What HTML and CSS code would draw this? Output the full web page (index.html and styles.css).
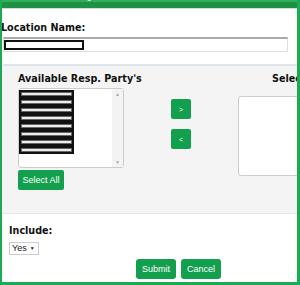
FILE: index.html
```html
<!DOCTYPE html>
<html lang="en">
<head>
    <meta charset="UTF-8">
    <meta name="viewport" content="width=device-width, initial-scale=1.0">
    <title>Location Entry</title>
    <link rel="stylesheet" href="styles.css">
</head>
<body>
    <div class="modal">
        <div class="modal-header">
            <h2>Location Entry</h2>
        </div>

        <div class="field">
            <label class="field-label">Location Name:</label>
            <div class="text-input"><span class="redact"></span></div>
        </div>

        <div class="picker">
            <div class="pick-col">
                <div class="field-label">Available Resp. Party's</div>
                <div class="listbox">
                    <div class="list-items">
                        <div class="redact-row"></div>
                        <div class="redact-row"></div>
                        <div class="redact-row"></div>
                        <div class="redact-row"></div>
                        <div class="redact-row"></div>
                        <div class="redact-row"></div>
                        <div class="redact-row"></div>
                        <div class="redact-row"></div>
                    </div>
                    <div class="scrollbar">
                        <span class="arrow">&#9650;</span>
                        <span class="arrow">&#9660;</span>
                    </div>
                </div>
                <button class="btn btn-select">Select All</button>
            </div>

            <div class="move-col">
                <button class="btn btn-move">&gt;</button>
                <button class="btn btn-move">&lt;</button>
            </div>

            <div class="pick-col selected-col">
                <div class="field-label">Selected Resp. Party's</div>
                <div class="listbox"></div>
                <button class="btn btn-select btn-remove">Remove All</button>
            </div>
        </div>

        <div class="field include">
            <label class="field-label">Include:</label>
            <div class="select-box">Yes <span class="caret">&#9660;</span></div>
        </div>

        <div class="actions">
            <button class="btn btn-action">Submit</button>
            <button class="btn btn-action">Cancel</button>
        </div>
    </div>
</body>
</html>
```

FILE: styles.css
```css
body {
    margin: 0;
    font-family: "Liberation Sans", Arial, sans-serif;
    background: #fff;
}

.modal {
    width: 300px;
    height: 285px;
    box-sizing: border-box;
    border: solid #19ad52;
    border-width: 0 3px 3px 2px;
    overflow: hidden;
    background: #fff;
}

.modal-header {
    height: 8px;
    background: #1e9143;
    box-shadow: inset 0 2px 0 #2fae5e;
    border-bottom: 1px solid #d3dbe0;
    overflow: hidden;
}

.modal-header h2 {
    margin: -10px 0 0 2px;
    font-family: "DejaVu Sans", Verdana, sans-serif;
    font-size: 11px;
    line-height: 12px;
    color: #fff;
}

.field {
    padding: 13px 0 0 1px;
}

.field-label {
    display: block;
    font-family: "DejaVu Sans", Verdana, sans-serif;
    font-weight: bold;
    font-size: 9.6px;
    line-height: 12px;
    color: #111;
    white-space: nowrap;
}

.field > .field-label {
    margin-left: -2px;
}

.text-input {
    width: 285px;
    height: 15px;
    margin-top: 3px;
    box-sizing: border-box;
    border: 1px solid #ddd;
    border-top: 2px solid #aaa;
    padding: 1px 0 0 0;
}

.redact {
    display: block;
    width: 76px;
    height: 6px;
    border: 2px solid #111;
    background: #fff;
}

.picker {
    display: flex;
    margin: 12px 0 0 1px;
    height: 150px;
    padding: 7px 0 0 15px;
    box-sizing: border-box;
    background: #f4f4f4;
    border-top: 2px solid #dde4ea;
    border-bottom: 1px solid #e6e6e6;
}

.pick-col {
    display: flex;
    flex-direction: column;
    align-items: flex-start;
    width: 106px;
    flex-shrink: 0;
}

.listbox {
    display: flex;
    width: 106px;
    height: 80px;
    margin-top: 3px;
    box-sizing: border-box;
    border: 1px solid #ccc;
    border-radius: 3px;
    background: #fff;
}

.list-items {
    flex: 1;
    padding-top: 1px;
}

.redact-row {
    width: 51px;
    height: 4px;
    border: 2px solid #111;
    background: #ececec;
    box-shadow: inset 0 0 0 1px #666;
}

.scrollbar {
    width: 11px;
    display: flex;
    flex-direction: column;
    justify-content: space-between;
    align-items: center;
    background: #f3f3f3;
    padding: 2px 0;
}

.arrow {
    font-size: 5px;
    color: #aaa;
}

.btn {
    border: none;
    border-radius: 2px;
    background: #13a04e;
    color: #fff;
    font-family: "Liberation Sans", Arial, sans-serif;
    font-size: 9px;
    padding: 0;
    cursor: pointer;
}

.btn-select {
    width: 46px;
    height: 20px;
    margin-top: 2px;
}

.move-col {
    display: flex;
    flex-direction: column;
    gap: 10px;
    padding-top: 26px;
    margin: 0 47px;
}

.btn-move {
    width: 20px;
    height: 20px;
    font-size: 7px;
}

.selected-col .field-label {
    margin-left: 34px;
}

.selected-col .listbox {
    width: 110px;
    margin-top: 11px;
}

.btn-remove {
    margin-left: 59px;
}

.include {
    padding: 11px 0 0 7px;
}

.include > .field-label {
    margin-left: 0;
}

.select-box {
    display: inline-flex;
    align-items: center;
    gap: 3px;
    margin-top: 1px;
    height: 13px;
    padding: 0 3px 0 2px;
    box-sizing: border-box;
    border: 1px solid #ccc;
    font-size: 9px;
    color: #222;
}

.caret {
    font-size: 5px;
}

.actions {
    display: flex;
    gap: 5px;
    padding: 4px 0 0 134px;
}

.btn-action {
    height: 20px;
    width: 40px;
    border-radius: 3px;
}
```
